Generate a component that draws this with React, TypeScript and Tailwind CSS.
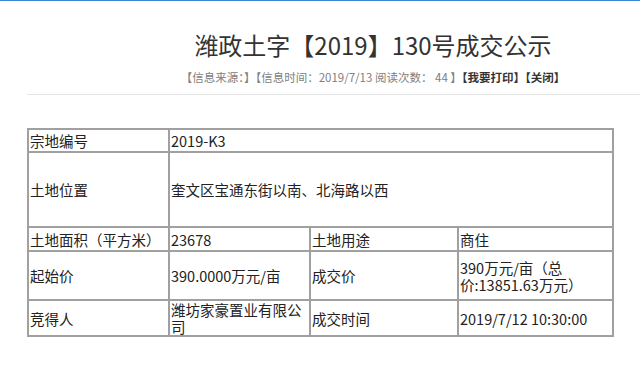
import React from 'react';

const cell = 'border border-[#a0a0a0] px-[1px] align-middle';

export default function App() {
  return (
    <div className="w-[640px] h-[380px] overflow-hidden bg-white text-[#333] font-['Noto_Sans_CJK_SC',sans-serif]">
      {/* Top accent line */}
      <div className="h-px bg-[#3a86d6]" />

      <div className="ml-[27px] w-[692px]">
        {/* Title */}
        <h1 className="mt-[28px] text-center text-[24px] leading-[32px] font-normal text-[#333]">
          潍政土字【2019】130号成交公示
        </h1>

        {/* Meta line */}
        <div className="mt-[6px] text-center text-[11.5px] leading-[20px] text-[#808080]">
          【信息来源：】【信息时间：2019/7/13 阅读次数： 44 】
          <span className="font-bold text-[#333]">【我要打印】【关闭】</span>
        </div>

        <div className="mt-[7px] border-t border-[#e5e5e5]" />

        {/* Detail table */}
        <table className="mt-[33px] w-[585px] table-fixed border-separate border-spacing-0 border border-[#a0a0a0] text-[14.5px] leading-[17px] text-[#222]">
          <colgroup>
            <col className="w-[141px]" />
            <col className="w-[141px]" />
            <col className="w-[148px]" />
            <col className="w-[155px]" />
          </colgroup>
          <tbody>
            <tr className="h-[23px]">
              <td className={cell}>宗地编号</td>
              <td className={cell} colSpan={3}>2019-K3</td>
            </tr>
            <tr className="h-[75px]">
              <td className={cell}>土地位置</td>
              <td className={cell} colSpan={3}>奎文区宝通东街以南、北海路以西</td>
            </tr>
            <tr className="h-[24px]">
              <td className={cell}>土地面积（平方米）</td>
              <td className={cell}>23678</td>
              <td className={cell}>土地用途</td>
              <td className={cell}>商住</td>
            </tr>
            <tr className="h-[49px]">
              <td className={cell}>起始价</td>
              <td className={cell}>390.0000万元/亩</td>
              <td className={cell}>成交价</td>
              <td className={cell}>
                390万元/亩（总
                <br />
                价:13851.63万元）
              </td>
            </tr>
            <tr className="h-[33px]">
              <td className={cell}>竞得人</td>
              <td className={cell}>
                潍坊家豪置业有限公
                <br />
                司
              </td>
              <td className={cell}>成交时间</td>
              <td className={cell}>2019/7/12 10:30:00</td>
            </tr>
          </tbody>
        </table>
      </div>
    </div>
  );
}
